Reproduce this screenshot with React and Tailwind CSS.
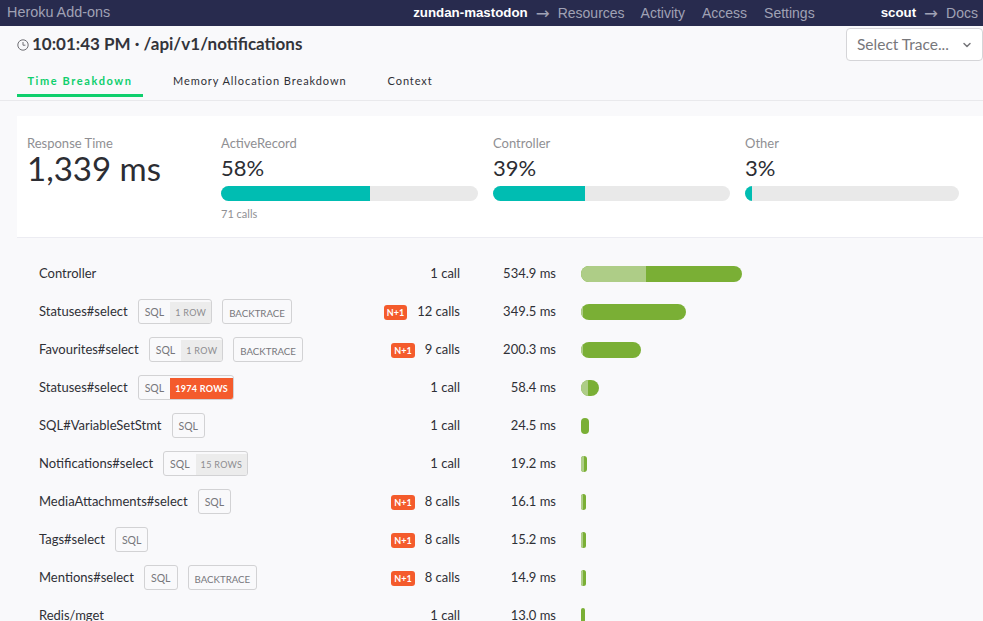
import React from "react";
import { ChevronDown } from "lucide-react";

const rows = [
  { name: "Controller", calls: "1 call", time: "534.9 ms", width: 161, light: 65 },
  { name: "Statuses#select", sql: true, tag: "1 ROW", backtrace: true, n1: true, calls: "12 calls", time: "349.5 ms", width: 105, light: 2 },
  { name: "Favourites#select", sql: true, tag: "1 ROW", backtrace: true, n1: true, calls: "9 calls", time: "200.3 ms", width: 60, light: 2 },
  { name: "Statuses#select", sql: true, tag: "1974 ROWS", hot: true, calls: "1 call", time: "58.4 ms", width: 18, light: 7 },
  { name: "SQL#VariableSetStmt", sql: true, calls: "1 call", time: "24.5 ms", width: 8, light: 0 },
  { name: "Notifications#select", sql: true, tag: "15 ROWS", calls: "1 call", time: "19.2 ms", width: 6, light: 3 },
  { name: "MediaAttachments#select", sql: true, n1: true, calls: "8 calls", time: "16.1 ms", width: 5, light: 2 },
  { name: "Tags#select", sql: true, n1: true, calls: "8 calls", time: "15.2 ms", width: 5, light: 2 },
  { name: "Mentions#select", sql: true, backtrace: true, n1: true, calls: "8 calls", time: "14.9 ms", width: 5, light: 2 },
  { name: "Redis/mget", calls: "1 call", time: "13.0 ms", width: 4, light: 0 },
];

const stats = [
  { label: "ActiveRecord", pct: 58, width: "w-[257px]", fill: 149, note: "71 calls" },
  { label: "Controller", pct: 39, width: "w-[237px]", fill: 92 },
  { label: "Other", pct: 3, width: "w-[214px]", fill: 7 },
];

function Clock() {
  return (
    <svg width="12" height="12" viewBox="0 0 12 12" fill="none" stroke="#6f6f74" strokeWidth="1" className="mr-[3px] mt-[2px] shrink-0">
      <circle cx="6" cy="6" r="5.2" />
      <path d="M6 3v3.2h2.4" />
    </svg>
  );
}

function Arrow() {
  return <span className="mx-[8px] font-['DejaVu_Sans',sans-serif] text-[16.7px] font-normal leading-none">→</span>;
}

function Pill({ children }) {
  return (
    <span className="inline-flex h-[25px] items-stretch overflow-hidden rounded-[3px] border border-[#d2d2d4] text-[10.5px] text-[#77777b]">
      {children}
    </span>
  );
}

function Row({ row }) {
  return (
    <div className="flex h-[38px] items-center text-[13px] text-[#2f3036]">
      <div className="flex w-[421px] items-center">
        <span className="whitespace-nowrap">{row.name}</span>
        {row.sql && (
          <span className="ml-[10px] flex pb-[1px]">
            <Pill>
              <span className="flex items-center px-[6px] pt-[3px]">SQL</span>
              {row.tag && (
                <span
                  className={
                    row.hot
                      ? "mt-[2px] flex items-center bg-[#f45b2c] px-[5px] pt-[1px] text-[9px] font-bold tracking-[0.3px] text-white"
                      : "mt-[2px] flex items-center bg-[#ececec] px-[5px] pt-[1px] text-[9px] tracking-[0.3px] text-[#8c8c90]"
                  }
                >
                  {row.tag}
                </span>
              )}
            </Pill>
          </span>
        )}
        {row.backtrace && (
          <span className="ml-[10px] flex pb-[1px]">
            <Pill>
              <span className="flex items-center px-[6px] pt-[3px] text-[9.7px]">BACKTRACE</span>
            </Pill>
          </span>
        )}
        <div className="ml-auto flex items-center">
          {row.n1 && (
            <span className="mr-[10px] rounded-[3px] bg-[#f45b2c] px-[3px] py-[1px] text-[9px] font-bold leading-[13px] text-white">
              N+1
            </span>
          )}
          <span>{row.calls}</span>
        </div>
      </div>
      <div className="w-[96px] text-right">{row.time}</div>
      <div className="ml-[25px] flex h-4 overflow-hidden rounded-full bg-[#7aaf35]" style={{ width: row.width }}>
        <div className="h-full bg-[#aecd87]" style={{ width: row.light }} />
      </div>
    </div>
  );
}

export default function App() {
  return (
    <div className="h-[621px] overflow-hidden bg-[#f9f9fb] font-['Lato',sans-serif]">
      <div className="flex h-[26px] items-center bg-[#282b4e] pl-[7px] pr-[5px] font-['Liberation_Sans',sans-serif] text-[14px] text-[#a0a2b5]">
        <span className="text-[14.4px]">Heroku Add-ons</span>
        <span className="ml-auto text-[13.3px] font-bold text-white">zundan-mastodon</span>
        <Arrow />
        <span>Resources</span>
        <span className="ml-[16px]">Activity</span>
        <span className="ml-[17px]">Access</span>
        <span className="ml-[17px]">Settings</span>
        <span className="ml-[66px] text-[13.3px] font-bold text-white">scout</span>
        <Arrow />
        <span>Docs</span>
      </div>

      <div className="relative h-[75px] border-b border-[#e9e9ec]">
        <div className="flex items-center pl-[17px] pt-[8px] text-[17px] font-bold leading-[20px] text-[#33343a]">
          <Clock />
          <span>10:01:43 PM · /api/v1/notifications</span>
        </div>
        <div className="mt-[17px] flex pl-[17px] text-[11px] tracking-[0.92px] text-[#2f3036]">
          <div className="h-[26px] w-[126px] border-b-[3px] border-[#0fcf6d] text-center font-bold leading-[20px] tracking-[1.6px] text-[#0fcf6d]">
            Time Breakdown
          </div>
          <div className="ml-[30px] leading-[20px]">Memory Allocation Breakdown</div>
          <div className="ml-[41px] leading-[20px]">Context</div>
        </div>
        <div className="absolute right-0 top-[2px] flex h-[33px] w-[137px] items-center justify-between rounded-[4px] border border-[#d5d5d8] bg-white pl-[10px] pr-[9px] text-[15.5px] text-[#77777b]">
          <span>Select Trace...</span>
          <ChevronDown size={12} strokeWidth={3} />
        </div>
      </div>

      <div className="ml-[17px] mt-[15px] flex h-[122px] border-b border-[#ececf2] bg-white pl-[10px] pt-[19px]">
        <div className="w-[194px] shrink-0">
          <div className="text-[13px] leading-[16px] text-[#8f8f93]">Response Time</div>
          <div className="-mt-[1px] text-[33px] leading-[36px] text-[#2c2d33]">1,339 ms</div>
        </div>
        {stats.map((s) => (
          <div key={s.label} className={`${s.width} mr-[15px] shrink-0`}>
            <div className="text-[13px] leading-[16px] text-[#8f8f93]">{s.label}</div>
            <div className="mt-[4px] text-[22px] leading-[26px] text-[#2c2d33]">{s.pct}%</div>
            <div className="mt-[5px] h-[15px] overflow-hidden rounded-full bg-[#e9e9e9]">
              <div className="h-full bg-[#00bdb2]" style={{ width: s.fill }} />
            </div>
            {s.note && <div className="mt-[6px] text-[11px] leading-[14px] text-[#8f8f93]">{s.note}</div>}
          </div>
        ))}
      </div>

      <div className="pl-[39px] pt-[17px]">
        {rows.map((row, i) => (
          <Row key={i} row={row} />
        ))}
      </div>
    </div>
  );
}
